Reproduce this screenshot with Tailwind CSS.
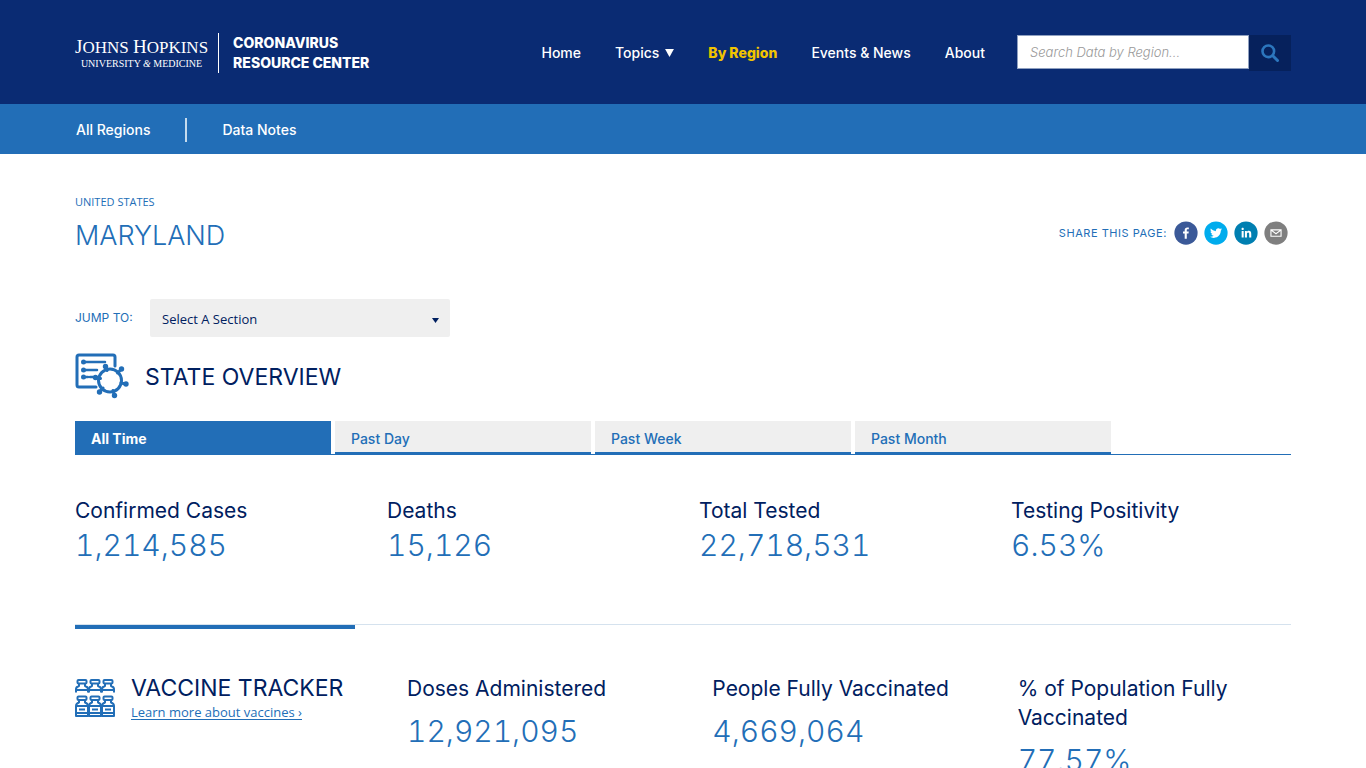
<!DOCTYPE html>
<html lang="en">
<head>
<meta charset="utf-8">
<meta name="viewport" content="width=device-width, initial-scale=1">
<title>Maryland - Johns Hopkins Coronavirus Resource Center</title>
<script src="https://cdn.jsdelivr.net/npm/@tailwindcss/browser@4"></script>
</head>
<body class="bg-white font-['Inter','Open_Sans',sans-serif] text-[#002060] h-screen overflow-hidden">
<header class="bg-[#0a2b73] text-white">
  <div class="flex h-26 items-center justify-between px-[75px] pt-[2px]">
    <a href="#" class="flex items-center">
      <span class="flex flex-col items-center border-r border-white pr-[10px] h-10 justify-center font-['Liberation_Serif',serif]">
        <span class="text-[17px] leading-5 whitespace-nowrap"><span class="text-[19px]">J</span>OHNS <span class="text-[19px]">H</span>OPKINS</span>
        <span class="text-[10px] leading-3 whitespace-nowrap">UNIVERSITY <i>&amp;</i> MEDICINE</span>
      </span>
      <span class="ml-[14px] text-[14px] leading-5 font-extrabold whitespace-nowrap">CORONAVIRUS<br>RESOURCE CENTER</span>
    </a>
    <div class="flex items-center">
      <nav class="mr-8 flex gap-[34px] text-[14px] leading-5 font-medium whitespace-nowrap">
        <a href="#">Home</a>
        <a href="#" class="flex items-center gap-[6px]">Topics
          <svg class="h-[8px] w-[9px]" viewBox="0 0 10 9" fill="currentColor"><path d="M0 0h10L5 9z"/></svg></a>
        <a href="#" class="font-extrabold text-[#f1c400]">By Region</a>
        <a href="#">Events &amp; News</a>
        <a href="#">About</a>
      </nav>
      <form class="flex items-start">
        <input type="text" aria-label="Search data by region" placeholder="Search Data by Region..." class="h-[34px] w-[232px] border border-[#8fa0c0] bg-white px-3 text-[13px] text-[#333] placeholder:font-light placeholder:text-[#999] placeholder:italic">
        <button type="button" aria-label="Search" class="flex h-9 w-[42px] items-center justify-center bg-[#06215c]">
          <svg class="size-[18px]" viewBox="0 0 18 18" fill="none" stroke="#2c76bd" stroke-linecap="round"><circle cx="7.3" cy="7.3" r="5.8" stroke-width="2.6"/><path d="M11.8 11.8l4.7 4.7" stroke-width="3"/></svg>
        </button>
      </form>
    </div>
  </div>
  <nav class="flex h-[50px] items-center bg-[#226eb7] px-[76px] pt-[2px] text-[14px] leading-5 font-medium">
    <a href="#">All Regions</a>
    <span class="mx-[35px] h-6 w-[2px] bg-[#c5dbee]"></span>
    <a href="#">Data Notes</a>
  </nav>
</header>
<main class="px-[75px] pt-10">
  <div class="flex items-end justify-between">
    <div>
      <a href="#" class="block font-['Open_Sans',sans-serif] text-[11px] leading-4 text-[#226eb7]">UNITED STATES</a>
      <h1 class="mt-2 text-[27px] leading-9 font-light text-[#226eb7]">MARYLAND</h1>
    </div>
    <div class="mr-[3px] mb-[9px] flex items-center gap-[6px]">
      <span class="mr-[1px] text-[11px] leading-4 tracking-wider text-[#226eb7]">SHARE THIS PAGE:</span>
      <button type="button" aria-label="Share on Facebook"><svg class="size-6" viewBox="0 0 64 64"><circle cx="32" cy="32" r="31" fill="#3b5998"/><path fill="#fff" d="M34.1,47V33.3h4.6l0.7-5.3h-5.3v-3.4c0-1.5,0.4-2.6,2.6-2.6l2.8,0v-4.8c-0.5-0.1-2.2-0.2-4.1-0.2c-4.1,0-6.9,2.5-6.9,7V28H24v5.3h4.5V47H34.1z"/></svg></button>
      <button type="button" aria-label="Share on Twitter"><svg class="size-6" viewBox="0 0 64 64"><circle cx="32" cy="32" r="31" fill="#00aced"/><path fill="#fff" d="M48,22.1c-1.2,0.5-2.4,0.9-3.8,1c1.4-0.8,2.4-2.1,2.9-3.6c-1.3,0.8-2.7,1.3-4.2,1.6C41.7,19.8,40,19,38.2,19c-3.6,0-6.6,2.9-6.6,6.6c0,0.5,0.1,1,0.2,1.5c-5.5-0.3-10.3-2.9-13.5-6.9c-0.6,1-0.9,2.1-0.9,3.3c0,2.3,1.2,4.3,2.9,5.5c-1.1,0-2.1-0.3-3-0.8c0,0,0,0.1,0,0.1c0,3.2,2.3,5.8,5.3,6.4c-0.6,0.1-1.1,0.2-1.7,0.2c-0.4,0-0.8,0-1.2-0.1c0.8,2.6,3.3,4.5,6.1,4.6c-2.2,1.8-5.1,2.8-8.2,2.8c-0.5,0-1.1,0-1.6-0.1c2.9,1.9,6.4,2.9,10.1,2.9c12.1,0,18.7-10,18.7-18.7c0-0.3,0-0.6,0-0.8C46,24.5,47.1,23.4,48,22.1z"/></svg></button>
      <button type="button" aria-label="Share on LinkedIn"><svg class="size-6" viewBox="0 0 64 64"><circle cx="32" cy="32" r="31" fill="#007fb1"/><path fill="#fff" d="M20.4,44h5.4V26.6h-5.4V44z M23.1,18c-1.7,0-3.1,1.4-3.1,3.1c0,1.7,1.4,3.1,3.1,3.1c1.7,0,3.1-1.4,3.1-3.1C26.2,19.4,24.8,18,23.1,18z M39.5,26.2c-2.6,0-4.4,1.4-5.1,2.8h-0.1v-2.4h-5.2V44h5.4v-8.6c0-2.3,0.4-4.5,3.2-4.5c2.8,0,2.8,2.6,2.8,4.6V44H46v-9.5C46,29.8,45,26.2,39.5,26.2z"/></svg></button>
      <button type="button" aria-label="Share by email"><svg class="size-6" viewBox="0 0 64 64"><circle cx="32" cy="32" r="31" fill="#7f7f7f"/><path fill="#fff" d="M17,22v20h30V22H17z M41.1,25L32,32.1L22.9,25H41.1z M20,39V26.6l12,9.3l12-9.3V39H20z"/></svg></button>
    </div>
  </div>
  <div class="mt-[45px] flex items-center">
    <label for="jump" class="w-[75px] text-[12px] text-[#226eb7]">JUMP TO:</label>
    <div class="relative w-[300px]">
      <select id="jump" class="h-[38px] w-full appearance-none rounded-[2px] bg-[#efefef] px-3 pt-[3px] font-['Open_Sans',sans-serif] text-[13px] font-medium text-[#002060]"><option>Select A Section</option></select>
      <svg class="pointer-events-none absolute top-[19px] right-[11px] h-[5px] w-[7px]" viewBox="0 0 7 5" fill="#002060"><path d="M0 0h7L3.500 5z"/></svg>
    </div>
  </div>
  <div class="mt-4 flex items-center gap-4">
    <svg class="h-[46px] w-[54px]" viewBox="0 0 54 46" fill="none" stroke="#226eb7" stroke-width="3" stroke-linecap="round" stroke-linejoin="round">
      <path d="M21 34H4a2 2 0 0 1-2-2V4a2 2 0 0 1 2-2h34a2 2 0 0 1 2 2v9"/>
      <path d="M9 9h21M9 17h13M9 24h4M15 24h3" stroke-width="2.500"/>
      <g fill="#226eb7" stroke="none"><circle cx="8.500" cy="9" r="2.500"/><circle cx="8.500" cy="17" r="2.500"/><circle cx="8.500" cy="24" r="2.500"/><circle cx="30.500" cy="13.500" r="2.700"/><circle cx="46.500" cy="16" r="2.700"/><circle cx="51" cy="31" r="2.700"/><circle cx="39.500" cy="42.500" r="2.700"/><circle cx="24.500" cy="39" r="2.700"/><circle cx="20.500" cy="24.500" r="2.700"/></g>
      <circle cx="35" cy="27.500" r="11.500"/>
      <path d="M30.500 13.500l1.500 4M46.500 16l-4 4M51 31l-5-1M39.500 42.500l-1.500-5M24.500 39l3.500-4M20.500 24.500l5 1"/>
    </svg>
    <h2 class="pt-[1px] text-[23px] leading-8">STATE OVERVIEW</h2>
  </div>
  <div class="mt-[22px] flex gap-1 border-b border-[#226eb7] text-[14px] leading-5 font-medium text-[#226eb7]" role="tablist">
    <button type="button" role="tab" aria-selected="true" class="h-[33px] w-64 border-b-2 border-[#226eb7] bg-[#226eb7] px-4 pt-1 text-left font-bold text-white">All Time</button>
    <button type="button" role="tab" class="h-[33px] w-64 border-b-2 border-[#226eb7] bg-[#efefef] px-4 pt-1 text-left">Past Day</button>
    <button type="button" role="tab" class="h-[33px] w-64 border-b-2 border-[#226eb7] bg-[#efefef] px-4 pt-1 text-left">Past Week</button>
    <button type="button" role="tab" class="h-[33px] w-64 border-b-2 border-[#226eb7] bg-[#efefef] px-4 pt-1 text-left">Past Month</button>
  </div>
  <section class="mt-10 grid grid-cols-4 gap-8">
    <div><h3 class="text-[21px] leading-8">Confirmed Cases</h3><p class="text-[30px] leading-9 font-light text-[#226eb7] tabular-nums">1,214,585</p></div>
    <div><h3 class="text-[21px] leading-8">Deaths</h3><p class="text-[30px] leading-9 font-light text-[#226eb7] tabular-nums">15,126</p></div>
    <div><h3 class="text-[21px] leading-8">Total Tested</h3><p class="text-[30px] leading-9 font-light text-[#226eb7] tabular-nums">22,718,531</p></div>
    <div><h3 class="text-[21px] leading-8">Testing Positivity</h3><p class="text-[30px] leading-9 font-light text-[#226eb7] tabular-nums">6.53%</p></div>
  </section>
  <div class="mt-[61px] border-t border-[#d5e2ee]"><div class="h-1 w-[280px] bg-[#226eb7]"></div></div>
  <section class="mt-[45px] grid grid-cols-[300px_1fr_1fr_1fr] gap-8">
    <div class="flex gap-4">
      <svg class="mt-1 h-10 w-10 shrink-0" viewBox="0 0 40 40" fill="none" stroke="#226eb7" stroke-width="2" stroke-linejoin="round">
        <defs>
          <g id="cap"><rect x="2.500" y="2" width="9" height="3.500" rx="1"/><path d="M4 6v2q-3 1-3 3v3.500M10 6v2q3 1 3 3v3.500M1 12h12"/></g>
          <g id="vial"><rect x="2.500" y="1.500" width="9" height="3.500" rx="1"/><path d="M4 5.500v2q-3 1-3 3.500v10h12v-10q0-2.500-3-3.500v-2M1 11h12M1 18h12"/><path d="M4 14.500h6" stroke-width="2"/></g>
        </defs>
        <use href="#cap"/><use href="#cap" x="13"/><use href="#cap" x="26"/>
        <use href="#vial" y="17"/><use href="#vial" x="13" y="17"/><use href="#vial" x="26" y="17"/>
      </svg>
      <div>
        <h2 class="text-[23px] leading-7 whitespace-nowrap">VACCINE TRACKER</h2>
        <a href="#" class="block font-['Open_Sans',sans-serif] text-[13px] leading-5 text-[#226eb7] underline underline-offset-2">Learn more about vaccines ›</a>
      </div>
    </div>
    <div><h3 class="text-[21px] leading-[29px]">Doses Administered</h3><p class="mt-2 text-[30px] leading-10 font-light text-[#226eb7] tabular-nums">12,921,095</p></div>
    <div><h3 class="text-[21px] leading-[29px] whitespace-nowrap">People Fully Vaccinated</h3><p class="mt-2 text-[30px] leading-10 font-light text-[#226eb7] tabular-nums">4,669,064</p></div>
    <div><h3 class="text-[21px] leading-[29px]">% of Population Fully Vaccinated</h3><p class="mt-2 text-[30px] leading-10 font-light text-[#226eb7] tabular-nums">77.57%</p></div>
  </section>
</main>
</body>
</html>
